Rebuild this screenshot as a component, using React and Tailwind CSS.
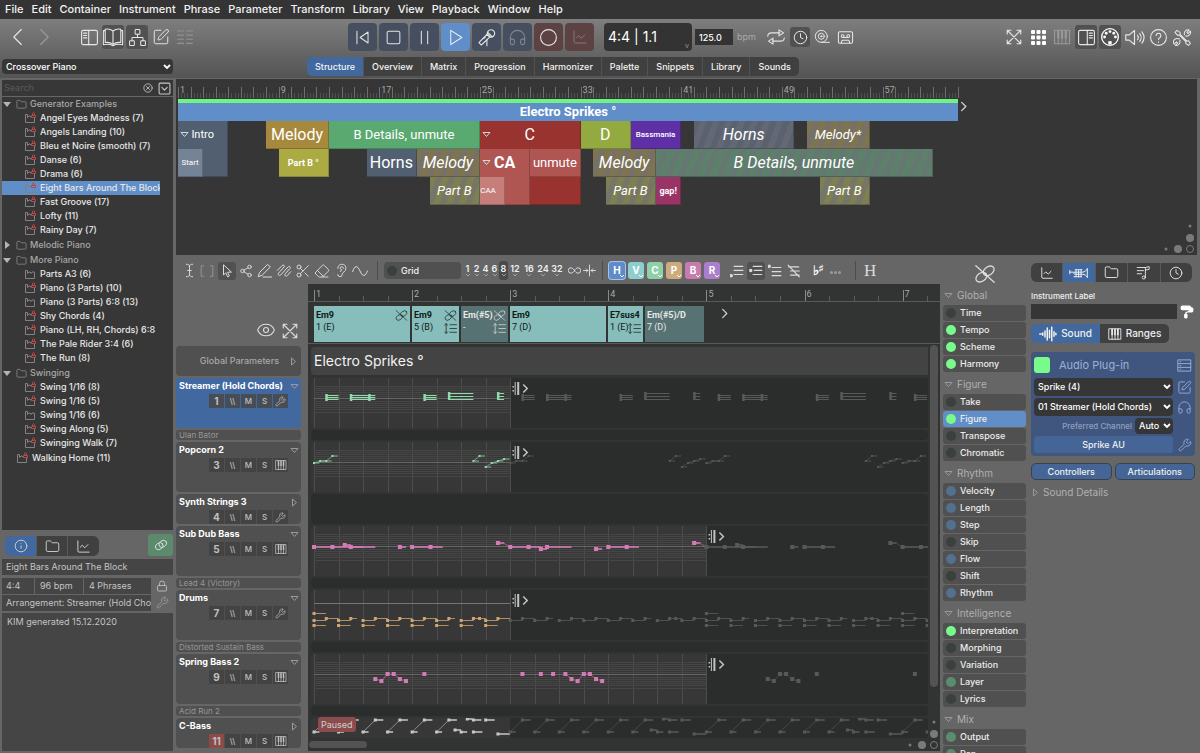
import { useState } from 'react';
import { Network, SquarePen, Folder, ChartLine, Info, Wrench, Lock, Scissors, Eraser, Ear, Eye, Share2, Headphones, Clock, PaintRoller, CassetteTape } from 'lucide-react';

// Horizontal scale of the phrase editor: pixels per sixteenth note
const STEP = 98.1 / 16;

const MENUS = ['File', 'Edit', 'Container', 'Instrument', 'Phrase', 'Parameter', 'Transform', 'Library', 'View', 'Playback', 'Window', 'Help'];

const TABS = ['Structure', 'Overview', 'Matrix', 'Progression', 'Harmonizer', 'Palette', 'Snippets', 'Library', 'Sounds'];

const LIBRARY = [
  {
    name: 'Generator Examples',
    open: true,
    items: [
      ['Angel Eyes Madness (7)', true],
      ['Angels Landing (10)', true],
      ['Bleu et Noire (smooth) (7)', true],
      ['Danse (6)', true],
      ['Drama (6)', true],
      ['Eight Bars Around The Block', true],
      ['Fast Groove (17)', true],
      ['Lofty (11)', true],
      ['Rainy Day (7)', true],
    ],
  },
  { name: 'Melodic Piano', open: false, items: [] },
  {
    name: 'More Piano',
    open: true,
    items: [
      ['Parts A3 (6)', false],
      ['Piano (3 Parts) (10)', true],
      ['Piano (3 Parts) 6:8 (13)', false],
      ['Shy Chords (4)', true],
      ['Piano (LH, RH, Chords) 6:8', true],
      ['The Pale Rider 3:4 (6)', true],
      ['The Run (8)', true],
    ],
  },
  {
    name: 'Swinging',
    open: true,
    items: [
      ['Swing 1/16 (8)', true],
      ['Swing 1/16 (5)', true],
      ['Swing 1/16 (6)', false],
      ['Swing Along (5)', true],
      ['Swinging Walk (7)', true],
    ],
  },
];

const STRIPES = 'bg-[repeating-linear-gradient(110deg,transparent_0_6px,rgba(110,110,120,0.5)_6px_12px)] italic';

// from / to are bar lines counted from zero
const CONTAINERS = [
  { label: 'Intro', from: 0, to: 4, row: 1, rows: 2, look: 'bg-[#515f70] text-[11px]', arrow: true },
  { label: 'Start', from: 0, to: 2, row: 2, look: 'bg-[#758396] text-[8px]' },
  { label: 'Melody', from: 7, to: 12, row: 1, look: 'bg-[#a6893d] text-base' },
  { label: 'Part B °', from: 8, to: 12, row: 2, look: 'bg-[#acab43] text-[9px] font-bold' },
  { label: 'B Details, unmute', from: 12, to: 24, row: 1, look: 'bg-[#5aa970] text-[13px]' },
  { label: 'Horns', from: 15, to: 19, row: 2, look: 'bg-[#515f70] text-base' },
  { label: 'Melody', from: 19, to: 24, row: 2, look: `bg-[#7f7450] text-base ${STRIPES}` },
  { label: 'Part B', from: 20, to: 24, row: 3, look: `bg-[#7f7f54] text-[13px] ${STRIPES}` },
  { label: 'C', from: 24, to: 32, row: 1, rows: 3, look: 'bg-[#99332f] text-base', arrow: true },
  { label: 'CA', from: 24, to: 28, row: 2, rows: 2, look: 'bg-[#af5653] text-base font-bold', arrow: true },
  { label: 'CAA', from: 24, to: 26, row: 3, look: 'bg-[#c67e7b] text-[8px] pr-[8px]' },
  { label: 'unmute', from: 28, to: 32, row: 2, look: 'bg-[#af5653] text-[13px]' },
  { label: 'D', from: 32, to: 36, row: 1, look: 'bg-[#92aa3f] text-base' },
  { label: 'Bassmania', from: 36, to: 40, row: 1, look: 'bg-[#5f2fa6] text-[8px] font-medium' },
  { label: 'Melody', from: 33, to: 38, row: 2, look: `bg-[#7f7450] text-base ${STRIPES}` },
  { label: 'Part B', from: 34, to: 38, row: 3, look: `bg-[#7f7f54] text-[13px] ${STRIPES}` },
  { label: 'gap!', from: 38, to: 40, row: 3, look: 'bg-[#9a3366] text-[9px] font-bold' },
  { label: 'B Details, unmute', from: 38, to: 60, row: 2, look: `bg-[#5c806a] text-base ${STRIPES}` },
  { label: 'Horns', from: 41, to: 49, row: 1, look: `bg-[#5a6270] text-base ${STRIPES}` },
  { label: 'Melody*', from: 50, to: 55, row: 1, look: `bg-[#7f7450] text-[13px] ${STRIPES}` },
  { label: 'Part B', from: 51, to: 55, row: 3, look: `bg-[#7f7f54] text-[13px] ${STRIPES}` },
];

const CHORDS = [
  { name: 'Em9', degree: '1 (E)', width: 'w-[98px]', unlinked: true },
  { name: 'Em9', degree: '5 (B)', width: 'w-[49px]', unlinked: true, voicing: true },
  { name: 'Em(#5)', degree: '-', width: 'w-[49px]', dim: true, unlinked: true, voicing: true },
  { name: 'Em9', degree: '7 (D)', width: 'w-[98px]' },
  { name: 'E7sus4', degree: '1 (E)', width: 'w-[37px]', voicing: true },
  { name: 'Em(#5)/D', degree: '7 (D)', width: 'w-[61px]', dim: true },
];

const TRACKS = [
  { name: 'Streamer (Hold Chords)', no: 1, size: 'tall', tool: 'wrench', selected: true },
  { name: 'Ulan Bator', size: 'thin' },
  { name: 'Popcorn 2', no: 3, size: 'tall', tool: 'keys' },
  { name: 'Synth Strings 3', no: 4, size: 'short', tool: 'wrench' },
  { name: 'Sub Dub Bass', no: 5, size: 'tall', tool: 'keys' },
  { name: 'Lead 4 (Victory)', size: 'thin' },
  { name: 'Drums', no: 7, size: 'tall', tool: 'wrench' },
  { name: 'Distorted Sustain Bass', size: 'thin' },
  { name: 'Spring Bass 2', no: 9, size: 'tall', tool: 'keys' },
  { name: 'Acid Run 2', size: 'thin' },
  { name: 'C-Bass', no: 11, size: 'short', tool: 'keys', alert: true },
];

const PARAMETERS = [
  ['Global', [['Time', 'off'], ['Tempo', 'on'], ['Scheme', 'on'], ['Harmony', 'on']]],
  ['Figure', [['Take', 'off'], ['Figure', 'on', true], ['Transpose', 'off'], ['Chromatic', 'off']]],
  ['Rhythm', [['Velocity', 'blue'], ['Length', 'blue'], ['Step', 'blue'], ['Skip', 'off'], ['Flow', 'blue'], ['Shift', 'off'], ['Rhythm', 'blue']]],
  ['Intelligence', [['Interpretation', 'on'], ['Morphing', 'off'], ['Variation', 'off'], ['Layer', 'dim'], ['Lyrics', 'off']]],
  ['Mix', [['Output', 'dim'], ['Pan', 'dim']]],
];

const LED = {
  on: 'bg-[#79fb8b]',
  off: 'bg-[#3a403e]',
  blue: 'bg-[#54708f]',
  dim: 'bg-[#5c8c70]',
};

/* ---------- icons ---------- */

function Glyph({ size = 16, sw = 1.5, className = '', children }) {
  return (
    <svg width={size} height={size} viewBox="0 0 24 24" fill="none" stroke="currentColor" strokeWidth={sw} strokeLinecap="round" strokeLinejoin="round" className={`shrink-0 ${className}`} aria-hidden="true">
      {children}
    </svg>
  );
}

const KeysIcon = ({ size = 12 }) => (
  <Glyph size={size} sw={1.5}>
    <rect x="2" y="3" width="20" height="18" />
    <path d="M7 14v7M12 14v7M17 14v7" />
    <path d="M7 3v11M12 3v11M17 3v11" strokeWidth="3" strokeLinecap="butt" />
  </Glyph>
);

const ExpandIcon = ({ size = 18 }) => (
  <Glyph size={size} sw={1.5}>
    <path d="M3 8V3h5M16 3h5v5M21 16v5h-5M8 21H3v-5M3 3l18 18M21 3 3 21" />
  </Glyph>
);

const UnlinkIcon = ({ size = 14 }) => (
  <Glyph size={size} sw={1.4}>
    <ellipse cx="8" cy="15.500" rx="6.500" ry="4.500" transform="rotate(-35 8 15.500)" />
    <ellipse cx="16" cy="8.500" rx="6.500" ry="4.500" transform="rotate(-35 16 8.500)" />
    <path d="M2 3l20 18" />
  </Glyph>
);

const VoicingIcon = () => (
  <Glyph size={13} sw={1.6}>
    <path d="M4 3v18M1 6l3-3 3 3M1 18l3 3 3-3M11 5h12M11 12h12M11 19h12" />
  </Glyph>
);

const PanelIcon = ({ flip }) => (
  <Glyph size={19} sw={1.4} className={flip ? '-scale-x-100' : ''}>
    <rect x="2" y="3" width="20" height="18" rx="2" />
    <path d="M11 3v18M4.500 6.500h4M4.500 9.500h4M4.500 12.500h4" />
  </Glyph>
);

const BookIcon = () => (
  <Glyph size={22} sw={1.2}>
    <path d="M12 5.500C9.500 3.500 6 3 3.500 3.500v14.500c3-.5 6 0 8.500 2 2.500-2 5.500-2.500 8.500-2V3.500C18 3 14.500 3.500 12 5.500zM12 5.500V20M3.500 5H1.500v15.500c4-1 7.500-.5 10.500 1 3-1.500 6.500-2 10.500-1V5h-2" />
  </Glyph>
);

const MicIcon = () => (
  <Glyph size={19} sw={1.4}>
    <path d="M13 7.500a4.700 4.700 0 1 1 4 4zM14 6l5 5" />
    <path d="M12.500 8 2.500 18.500l3 3L16 11.500z" />
    <path d="M12.500 15v7.500M8.500 13.500l2-2" />
  </Glyph>
);

const ToolsIcon = () => (
  <Glyph size={19} sw={1.3}>
    <path d="M2.500 5.500 5 3l4 2.500V8l8.500 8.500 2-.5 2.500 3.500-2.500 2.500-3.500-2.500.5-2L8 9H5.500z" />
    <path d="M14.500 8.500a4.800 4.800 0 0 1 6-6L17.500 5.500l1.500 1.500 3-3a4.800 4.800 0 0 1-6 6M9 15.500l-.500 1a4.500 4.500 0 0 1-5.500 5.500l3-3-1.500-1.500-3 3a4.500 4.500 0 0 1 6-6.500l.500-.500" />
  </Glyph>
);

const MidiIcon = () => (
  <Glyph size={20} sw={1.6}>
    <circle cx="12" cy="12" r="10" />
    <g fill="currentColor" stroke="none">
      <circle cx="5.500" cy="12" r="1.700" /><circle cx="18.500" cy="12" r="1.700" /><circle cx="7.500" cy="7.500" r="1.700" />
      <circle cx="16.500" cy="7.500" r="1.700" /><circle cx="12" cy="5.500" r="1.700" /><rect x="10" y="17" width="4" height="4" />
    </g>
  </Glyph>
);

const SpeakerIcon = () => (
  <Glyph size={21} sw={1.3}>
    <path d="M2 9h4l6-5v16l-6-5H2zM15.500 9.500c1 1.500 1 3.500 0 5M18 7.500c2 2.500 2 6.500 0 9M20.500 5.500c3 4 3 9 0 13" />
  </Glyph>
);

const TrumpetIcon = () => (
  <Glyph size={20} sw={1.2}>
    <path d="M1 9v4M1 11h15c3 0 5-2 6-4.500v11c-1-2.500-3-4-6-4H6.500a1.500 1.500 0 0 1 0-2.500M6 16.500h9M8.500 8.500v8M11.500 8.500v8M14.500 8.500v8M7.500 8h2M10.500 8h2M13.500 8h2" />
  </Glyph>
);

const NotesIcon = () => (
  <Glyph size={15} sw={1.4}>
    <path d="M2 4h13M2 9h10M2 14h7M15 20V4l6-1.500v4.500l-6 1" />
    <circle cx="12.500" cy="20" r="2.500" />
  </Glyph>
);

const WaveIcon = () => (
  <Glyph size={18} sw={2}>
    <path d="M1 12h2M5 10.500v3M8 8v8M11 4v16M14 7v10M17 3v18M20 9v6M22.500 11v2" />
  </Glyph>
);

const LinkedIcon = () => (
  <Glyph size={14} sw={1.5}>
    <ellipse cx="9" cy="14" rx="7" ry="5.500" transform="rotate(-35 9 14)" />
    <ellipse cx="15" cy="10" rx="7" ry="5.500" transform="rotate(-35 15 10)" />
  </Glyph>
);

function Triangle({ right, className = 'text-[#9a9a9a]' }) {
  return (
    <svg width="9" height="9" viewBox="0 0 9 9" fill="none" stroke="currentColor" className={`shrink-0 ${className}`} aria-hidden="true">
      <path d={right ? 'M2.500 1v7l4-3.500z' : 'M1 2.500h7l-3.500 4z'} />
    </svg>
  );
}

// Zoom handles in the corner of a scrolling view
function ZoomDots({ className }) {
  return (
    <svg width="32" height="32" className={`absolute ${className}`} fill="#7a7a7a" aria-hidden="true">
      <circle cx="26" cy="3" r="1.500" /><circle cx="26" cy="15" r="4" />
      <circle cx="2" cy="26" r="1.500" /><circle cx="14" cy="26" r="4" />
      <circle cx="26" cy="26" r="3.500" fill="none" stroke="#7a7a7a" />
    </svg>
  );
}

/* ---------- small controls ---------- */

function Picker({ label, options, className }) {
  return (
    <div className={`relative ${className}`}>
      <select aria-label={label} className="block h-full w-full appearance-none overflow-hidden rounded-[4px] bg-[#363636] pl-[4px] pr-[11px] text-[9px] font-medium text-white outline-none">
        {options.map((option) => <option key={option}>{option}</option>)}
      </select>
      <svg width="8" height="6" viewBox="0 0 8 6" className="pointer-events-none absolute right-[2px] top-1/2 -translate-y-1/2" fill="none" stroke="#fff" strokeWidth="1.800" aria-hidden="true">
        <path d="M1 1l3 3 3-3" />
      </svg>
    </div>
  );
}

function IconButton({ label, active, className = '', children }) {
  return (
    <button aria-label={label} className={`flex shrink-0 items-center justify-center rounded-[3px] ${active ? 'bg-[#515151]' : ''} ${className}`}>
      {children}
    </button>
  );
}

/* ---------- header ---------- */

function MenuBar() {
  return (
    <nav className="flex h-[19px] shrink-0 items-center gap-2 bg-[#343434] pl-[5px] text-[11px] font-medium text-[#f2f2f2]">
      {MENUS.map((menu) => <button key={menu}>{menu}</button>)}
    </nav>
  );
}

function Transport() {
  const idle = 'bg-[#454f5f] text-[#e4e4e4]';
  const armed = 'bg-[#5c4242] text-[#e4e4e4]';
  const buttons = [
    ['Rewind', idle, <Glyph size={19} sw={1.3} key="i"><path d="M5 4v16M19 5v14L9 12z" /></Glyph>],
    ['Stop', idle, <Glyph size={19} sw={1.3} key="i"><rect x="4" y="4" width="16" height="16" rx="2" /></Glyph>],
    ['Pause', idle, <Glyph size={19} sw={1.3} key="i"><path d="M8 4v16M16 4v16" /></Glyph>],
    ['Play', 'bg-[#608ec8] text-[#f0f0f0]', <Glyph size={19} sw={1.3} key="i"><path d="M6 3v18l14-9z" /></Glyph>],
    ['Sing', idle, <MicIcon key="i" />],
    ['Listen', 'bg-[#454f5f] text-[#7f8791]', <Headphones size={19} strokeWidth={1.4} key="i" />],
    ['Record', armed, <Glyph size={19} sw={1.4} key="i"><circle cx="12" cy="12" r="10" /></Glyph>],
    ['Record curve', 'bg-[#5c4242] text-[#8b7777]', <ChartLine size={16} strokeWidth={1.5} key="i" />],
  ];
  return (
    <div className="flex gap-[2px]">
      {buttons.map(([label, look, icon]) => (
        <button key={label} aria-label={label} className={`flex h-7 w-[29px] items-center justify-center rounded-[4px] ${look}`}>{icon}</button>
      ))}
    </div>
  );
}

function Header() {
  const [tab, setTab] = useState('Structure');
  return (
    <header className="flex h-[59px] shrink-0 flex-col bg-linear-to-b from-[#7e7e7e] to-[#545454] text-[#e6e6e6]">
      <div className="flex h-[36px] items-center">
        <div className="flex w-[348px] shrink-0 items-center pl-[8px]">
          <IconButton label="Back" className="w-5"><Glyph size={20} sw={1.4}><path d="m16 3-9 9 9 9" /></Glyph></IconButton>
          <IconButton label="Forward" className="ml-[6px] w-5 text-[#999]"><Glyph size={20} sw={1.4}><path d="m8 3 9 9-9 9" /></Glyph></IconButton>
          <div className="ml-[24px] flex items-center gap-[2px]">
            <IconButton label="Library panel" className="h-6 w-[22px]"><PanelIcon /></IconButton>
            <IconButton label="Book view" active className="h-6 w-[22px]"><BookIcon /></IconButton>
            <IconButton label="Tree view" active className="h-6 w-[22px]"><Network size={19} strokeWidth={1.3} /></IconButton>
            <IconButton label="Edit" className="h-6 w-[22px]"><SquarePen size={18} strokeWidth={1.3} /></IconButton>
            <IconButton label="Rows" className="h-6 w-[22px] text-[#929292]">
              <Glyph size={18} sw={1.4}><path d="M2 4h8M2 9.500h8M2 15h8M2 20.500h8M14 4h8M14 9.500h8M14 15h8M14 20.500h8" /></Glyph>
            </IconButton>
          </div>
        </div>
        <Transport />
        <div className="relative ml-[10px] h-7 w-[88px] rounded-[4px] bg-[#333] pl-[4px] text-[14px] leading-7 text-white">
          4:4 | 1.1
          <span className="absolute bottom-[2px] right-[3px] text-[7px] leading-none text-[#999]">v</span>
        </div>
        <input aria-label="Tempo" defaultValue="125.0" className="ml-[3px] h-4 w-[38px] bg-[#333] px-[4px] text-[9px] font-medium text-white" />
        <span className="ml-[4px] w-[20px] text-[9px] text-[#aaa]">bpm</span>
        <div className="ml-[9px] flex items-center gap-[2px]">
          <IconButton label="Loop" className="h-5 w-5">
            <Glyph size={18} sw={1.4}><path d="M1 11c0-3 2-4.500 5-4.500h11M16 2.500l6 4-6 4zM23 13c0 3-2 4.500-5 4.500H7M8 13.500l-6 4 6 4z" /></Glyph>
          </IconButton>
          <IconButton label="Clock" active className="ml-[2px] h-5 w-5"><Clock size={15} strokeWidth={1.6} /></IconButton>
          <IconButton label="Tape" className="h-5 w-5">
            <Glyph size={16}><circle cx="11" cy="11" r="9" /><circle cx="11" cy="11" r="4.500" /><circle cx="11" cy="11" r="1" /><path d="M11 20h12" /></Glyph>
          </IconButton>
          <IconButton label="Cassette" className="ml-px h-5 w-5"><CassetteTape size={17} strokeWidth={1.5} /></IconButton>
        </div>
        <div className="ml-auto flex items-center gap-[2px] pr-[7px]">
          <IconButton label="Full screen" className="h-6 w-[22px]"><ExpandIcon /></IconButton>
          <IconButton label="Grid" className="h-6 w-[22px] text-white">
            <svg width="15" height="15" viewBox="0 0 15 15" fill="currentColor" aria-hidden="true">
              {[0, 5.5, 11].map((y) => [0, 5.5, 11].map((x) => <rect key={`${x}-${y}`} x={x} y={y} width="4" height="4" rx="1" />))}
            </svg>
          </IconButton>
          <IconButton label="Keyboard" className="h-6 w-[22px] text-[#999]"><KeysIcon size={18} /></IconButton>
          <IconButton label="Inspector panel" active className="h-6 w-[22px]"><PanelIcon flip /></IconButton>
          <IconButton label="MIDI" active className="h-6 w-[22px] text-white"><MidiIcon /></IconButton>
          <IconButton label="Volume" className="h-6 w-[22px]"><SpeakerIcon /></IconButton>
          <IconButton label="Help" className="h-6 w-[22px]">
            <Glyph size={19} sw={1.4}><circle cx="12" cy="12" r="10" /><path d="M9 9.500a3 3 0 1 1 4.500 2.700c-1 .6-1.500 1.200-1.500 2.300M12 17.500v.5" /></Glyph>
          </IconButton>
          <IconButton label="Settings" className="h-6 w-[22px]"><ToolsIcon /></IconButton>
        </div>
      </div>
      <div className="flex items-center pt-[2px]">
        <div className="w-[307px] shrink-0 pl-[2px]">
          <Picker label="Library" options={['Crossover Piano']} className="h-[15px] w-[171px]" />
        </div>
        <div role="tablist" className="flex h-[19px] gap-px overflow-hidden rounded-[5px] bg-[#525252]">
          {TABS.map((name) => (
            <button key={name} role="tab" aria-selected={tab === name} onClick={() => setTab(name)} className={`px-2 text-[9px] font-medium text-[#f2f2f2] ${tab === name ? 'bg-[#41689f]' : 'bg-[#404040]'}`}>
              {name}
            </button>
          ))}
        </div>
      </div>
    </header>
  );
}

/* ---------- left sidebar ---------- */

function PhraseIcon({ locked }) {
  return (
    <svg width="13" height="12" viewBox="0 0 13 12" fill="none" className="shrink-0" aria-hidden="true">
      <path d="M1.500 2.500v8h9v-4.500M1.500 2.500h2v3l1.500-1.500h1l1 1.500" stroke="#828282" />
      {!locked && <path d="M7 5.500l1-1.500h2.500v3" stroke="#828282" />}
      {locked && <path d="M7.500 3.500h4v2h-4zM8.500 3.500V1.500c0-1 2-1 2 0v2" stroke="#b94a48" />}
    </svg>
  );
}

function LibraryTree() {
  return (
    <div className="min-h-0 flex-1 overflow-hidden bg-[#373737] pr-[13px] text-[9px] font-medium text-[#e8e8e8]">
      <ul>
        {LIBRARY.map((group) => (
          <li key={group.name} className="mb-px">
            <button className="flex h-[14px] w-full items-center text-[#a8a8a8]">
              <svg width="10" height="8" viewBox="0 0 10 8" fill="#b4b4b4" aria-hidden="true">
                <path d={group.open ? 'M1 2h8L5 7z' : 'M3 0v8l5-4z'} />
              </svg>
              <Folder size={11} strokeWidth={1.7} className="ml-[4px] mr-[3px] text-[#8c8c8c]" />
              {group.name}
            </button>
            <ul>
              {group.items.map(([name, locked]) => (
                <li key={name}>
                  <button className={`flex h-[14px] w-full items-center gap-[3px] overflow-hidden whitespace-nowrap pl-[22px] ${name.startsWith('Eight') ? 'bg-[#608ec8]' : ''}`}>
                    <PhraseIcon locked={locked} />
                    {name}
                  </button>
                </li>
              ))}
            </ul>
          </li>
        ))}
        <li>
          <button className="flex h-[14px] items-center gap-[3px] pl-[14px]"><PhraseIcon locked />Walking Home (11)</button>
        </li>
      </ul>
    </div>
  );
}

function Sidebar() {
  return (
    <aside className="flex w-[174px] shrink-0 flex-col pl-[2px] pr-px">
      <div className="mb-px mt-[2px] flex h-[16px] items-center bg-[#373737] pl-[2px] pr-[2px] text-[#c8c8c8]">
        <input aria-label="Search" placeholder="Search" className="min-w-0 flex-1 bg-transparent text-[9px] outline-none placeholder:text-[#5a5a5a]" />
        <button aria-label="Clear search" className="mr-[5px]"><Glyph size={10} sw={2}><circle cx="12" cy="12" r="10" /><path d="m8 8 8 8M16 8l-8 8" /></Glyph></button>
        <button aria-label="Search options"><Glyph size={13} sw={2}><rect x="2" y="2" width="20" height="20" rx="2" /><path d="m7 10 5 5 5-5" /></Glyph></button>
      </div>
      <LibraryTree />
      <div className="flex h-[29px] shrink-0 items-center justify-between pl-[3px]">
        <div className="mt-[3px] flex h-[20px] gap-px overflow-hidden rounded-[6px] bg-[#5a5a5a] text-[#d8d8d8]">
          <button aria-label="Info" className="flex w-[31px] items-center justify-center bg-[#41689f]"><Info size={14} strokeWidth={1.5} /></button>
          <button aria-label="Files" className="flex w-[30px] items-center justify-center bg-[#404040]"><Folder size={15} strokeWidth={1.4} /></button>
          <button aria-label="Chart" className="flex w-[31px] items-center justify-center bg-[#404040]"><ChartLine size={15} strokeWidth={1.5} /></button>
        </div>
        <button aria-label="Linked" className="flex h-[22px] w-[25px] items-center justify-center rounded-[3px] bg-[#5b8b6c] text-[#e0e0e0]"><LinkedIcon /></button>
      </div>
      <div className="flex h-[194px] shrink-0 flex-col gap-[2px] text-[9px] text-[#c4c4c4]">
        <div className="h-[16px] bg-[#454545] pl-[4px] leading-4">Eight Bars Around The Block</div>
        <div className="mt-px flex items-center">
          <div className="flex w-[149px] flex-col gap-px">
            <div className="flex gap-px leading-4">
              <span className="w-[32px] bg-[#454545] pl-[4px]">4:4</span>
              <span className="w-[48px] bg-[#454545] pl-[5px]">96 bpm</span>
              <span className="flex-1 bg-[#454545] pl-[5px]">4 Phrases</span>
            </div>
            <span className="overflow-hidden whitespace-nowrap bg-[#454545] pl-[4px] leading-4">Arrangement: Streamer (Hold Chords)</span>
          </div>
          <div className="flex flex-1 flex-col items-center gap-[4px]">
            <Lock size={12} strokeWidth={1.7} />
            <Wrench size={13} strokeWidth={1.5} className="text-[#a0a0a0]" />
          </div>
        </div>
        <textarea aria-label="Comment" defaultValue="KIM generated 15.12.2020" className="mb-[2px] min-h-0 flex-1 resize-none bg-[#454545] px-[5px] py-[2px] leading-[14px] outline-none" />
      </div>
    </aside>
  );
}

/* ---------- arrangement ---------- */

function Arrangement() {
  const bar = 780 / 62;
  return (
    <section className="relative ml-[2px] mr-[3px] mt-px h-44 shrink-0 overflow-hidden bg-[#363636] pl-[2px] font-[Roboto]">
      <svg width="784" height="20" className="block" aria-hidden="true">
        {Array.from({ length: 249 }, (_, i) => (
          <path key={i} d={`M${Math.round(i * bar / 4) + 0.5} ${i % 4 ? 14 : 8}V19`} stroke={i % 4 ? '#505050' : '#6e6e6e'} />
        ))}
        {[1, 9, 17, 25, 33, 41, 49, 57].map((n) => (
          <g key={n}>
            <rect x={(n - 1) * bar + 2} y="6" width={n > 9 ? 10 : 5} height="8" fill="#363636" />
            <text x={(n - 1) * bar + 2} y="14" fontSize="9" fill="#a8a8a8">{n}</text>
          </g>
        ))}
      </svg>
      <div className="flex items-center">
        <div className="flex h-[22px] w-[780px] shrink-0 items-center justify-center border-t-4 border-[#6ff383] bg-[#608ec8] text-[13px] font-bold text-white">Electro Sprikes °</div>
        <button aria-label="Continue" className="pb-[8px] text-[#d0d0d0]"><Glyph size={11} sw={3}><path d="m8 3 9 9-9 9" /></Glyph></button>
      </div>
      <div className="grid w-[780px] grid-cols-[repeat(62,minmax(0,1fr))] grid-rows-[28px_28px_28px] text-white">
        {CONTAINERS.map((c) => (
          <div
            key={`${c.from}-${c.row}`}
            className={`relative flex justify-center overflow-hidden whitespace-nowrap border-b border-r border-black/20 leading-7 ${c.look}`}
            style={{ gridColumn: `${c.from + 1} / ${c.to + 1}`, gridRow: `${c.row} / span ${c.rows || 1}` }}
          >
            {c.arrow && <Triangle className="absolute left-[2px] top-[9px] text-[#d8d8d8]" />}
            {c.label}
          </div>
        ))}
      </div>
      <ZoomDots className="bottom-0 right-px" />
    </section>
  );
}

/* ---------- phrase editor ---------- */

function EditorToolbar() {
  const [grid, setGrid] = useState('8');
  const tints = [
    ['H', 'bg-[#5f8cc9] ring-1 ring-[#a3c2ee]'], ['V', 'bg-[#8dcfce]'], ['C', 'bg-[#8ed0a7]'],
    ['P', 'bg-[#cdab7c]'], ['B', 'bg-[#c87cae]'], ['R', 'bg-[#aa7ecb]'],
  ];
  return (
    <div className="flex h-[27px] shrink-0 items-center pl-[8px] text-[#dcdcdc]">
      <div className="flex items-center gap-[1px]">
        <IconButton label="Text" className="h-[18px] w-[14px]"><Glyph size={15}><path d="M7 2c3 0 5 1 5 3 0-2 2-3 5-3M7 22c3 0 5-1 5-3 0 2 2 3 5 3M12 5v14M9 12h6" /></Glyph></IconButton>
        <IconButton label="Range" className="mx-[3px] h-[18px] w-[14px] text-[#999]"><Glyph size={14}><path d="M6 3H2v18h4M18 3h4v18h-4" /></Glyph></IconButton>
        <IconButton label="Select" active className="h-[18px] w-[18px]"><Glyph size={14} sw={1.700}><path d="M6 2v17l4-4 3 7 3-1.500-3-6.500h6z" /></Glyph></IconButton>
        <IconButton label="Connect" className="h-[18px] w-[18px]"><Share2 size={14} strokeWidth={1.6} /></IconButton>
        <IconButton label="Draw" className="h-[18px] w-[18px]"><Glyph size={16}><path d="M2 20 4 14 16 2l4 4L8 18zM9 21h13" /></Glyph></IconButton>
        <IconButton label="Scribble" className="h-[18px] w-[18px]"><Glyph size={16}><path d="M2 11 9 4c2-2 5 0 3 2l-8 9c-2 3 1 5 3 3L18 6c2-2 5 0 3 2l-7 8c-2 3 1 5 3 3l5-6" /></Glyph></IconButton>
        <IconButton label="Cut" className="h-[18px] w-[18px]"><Scissors size={16} strokeWidth={1.4} /></IconButton>
        <IconButton label="Erase" className="h-[18px] w-[18px]"><Eraser size={16} strokeWidth={1.4} /></IconButton>
        <IconButton label="Audition" className="h-[18px] w-[18px]"><Ear size={15} strokeWidth={1.5} /></IconButton>
        <IconButton label="Curve" className="h-[18px] w-[18px]"><Glyph size={16}><path d="M1 13C4 3 8 3 12 12s8 9 11 0" /></Glyph></IconButton>
      </div>
      <span className="ml-[8px] h-[19px] w-px bg-[#4c4c4c]" />
      <button className="ml-[6px] flex h-[17px] w-[77px] items-center gap-[4px] rounded-[4px] bg-[#505050] pl-[3px] text-[9px] font-medium text-[#f0f0f0]">
        <span className="h-[10px] w-[10px] rounded-full bg-[#3a403e]" />Grid
      </button>
      <div className="ml-[2px] flex items-center text-[9px] font-semibold text-[#f0f0f0]">
        {['1', '2', '4', '6', '8', '12', '16', '24', '32'].map((n) => (
          <button key={n} onClick={() => setGrid(n)} className={`flex h-[19px] flex-col items-center rounded-[3px] pt-[3px] leading-[10px] ${n.length > 1 ? 'w-[14px]' : 'w-[9px]'} ${grid === n ? 'bg-[#4a4a4a]' : ''}`}>
            {n}
            <svg width="4" height="3" viewBox="0 0 4 3" fill="none" stroke="#a0a0a0" aria-hidden="true"><path d="M0 0l2 2 2-2" /></svg>
          </button>
        ))}
        <IconButton label="Infinite grid" className="ml-[3px] h-[18px] w-[15px]"><Glyph size={13}><path d="M12 12c-2-3-4-5-6.500-5a5 5 0 0 0 0 10c2.500 0 4.500-2 6.500-5s4-5 6.500-5a5 5 0 0 1 0 10c-2.500 0-4.500-2-6.500-5z" /></Glyph></IconButton>
        <IconButton label="Snap" className="h-[18px] w-[15px]"><Glyph size={13}><path d="M12 2v20M1 12h8M6 9l3 3-3 3M23 12h-8M18 9l-3 3 3 3" /></Glyph></IconButton>
      </div>
      <span className="ml-[5px] h-[19px] w-px bg-[#4c4c4c]" />
      <div className="ml-[6px] flex gap-[3px]">
        {tints.map(([key, tint]) => (
          <button key={key} className={`relative h-[17px] w-[16px] rounded-[3px] text-[10px] font-bold leading-[17px] text-white ${tint}`}>
            {key}
            <svg width="4" height="3" viewBox="0 0 4 3" className="absolute bottom-[1px] right-[1px]" fill="none" stroke="#fff" aria-hidden="true"><path d="M0 0l2 2 2-2" /></svg>
          </button>
        ))}
      </div>
      <div className="ml-[8px] flex items-center gap-[1px]">
        <IconButton label="Align low" className="h-[18px] w-[18px]"><Glyph size={14} sw={2}><path d="M7 4h15M7 11h15M7 18h15" /><circle cx="2" cy="20" r="2" fill="currentColor" /></Glyph></IconButton>
        <IconButton label="Align middle" active className="h-[18px] w-[18px]"><Glyph size={14} sw={2}><path d="M7 4h15M9 11h13M7 18h15" /><circle cx="3" cy="11" r="2" fill="currentColor" /></Glyph></IconButton>
        <IconButton label="Align high" className="h-[18px] w-[18px]"><Glyph size={14} sw={2}><path d="M7 6h15M7 13h15M7 20h15" /><circle cx="2" cy="4" r="2" fill="currentColor" /></Glyph></IconButton>
        <IconButton label="No align" className="h-[18px] w-[18px]"><Glyph size={14} sw={2}><path d="M3 5h17M6 12h15M6 19h15M2 2l19 20" /></Glyph></IconButton>
      </div>
      <button aria-label="Accidentals" className="ml-[6px] w-[18px] text-[13px] font-bold leading-none text-white">♭<sup className="text-[9px]">♯</sup></button>
      <span className="ml-[3px] flex gap-px pt-[3px]">
        {[0, 1, 2].map((i) => <span key={i} className="h-[3px] w-[3px] rounded-sm bg-[#999]" />)}
      </span>
      <span className="ml-[14px] h-[19px] w-px bg-[#4c4c4c]" />
      <button aria-label="Harmony" className="ml-[8px] font-['Liberation_Serif'] text-[17px] leading-none">H</button>
    </div>
  );
}

const HEIGHTS = { tall: 'h-[50px]', short: 'h-[30px]', thin: 'h-[10px]' };

function TrackHeader({ track }) {
  if (track.size === 'thin') {
    return <div className="h-[10px] shrink-0 rounded-[3px] bg-[#505050] pl-[3px] text-[8px] leading-[10px] text-[#979797]">{track.name}</div>;
  }
  const cell = `flex h-[14px] w-[15px] items-center justify-center text-[8px] font-medium ${track.selected ? 'bg-[#464d55]' : 'bg-[#434343]'}`;
  return (
    <div className={`shrink-0 rounded-[4px] ${HEIGHTS[track.size]} ${track.selected ? 'bg-[#41689f]' : 'bg-[#505050]'}`}>
      <div className="flex h-[16px] items-center justify-between whitespace-nowrap pl-[3px] pr-[2px] text-[9px] font-bold text-white">
        {track.name}
        <Triangle right={track.size === 'short'} />
      </div>
      <div className="flex justify-end gap-px pr-[13px] text-[#c0c0c0]">
        <span className={`${cell} ${track.alert ? 'bg-[#8c4a49]!' : ''}`}><b className="text-[10px]">{track.no}</b></span>
        <button className={cell}>\\</button>
        <button className={cell}>M</button>
        <button className={cell}>S</button>
        <button aria-label="Instrument" className={cell}>{track.tool === 'keys' ? <KeysIcon size={12} /> : <Wrench size={11} strokeWidth={1.6} />}</button>
      </div>
    </div>
  );
}

// Each builder draws one pass of the phrase; x() turns a sixteenth into pixels
const PHRASES = {
  1: {
    length: 32,
    color: '#8fdcab',
    draw: (x, color) => [[2, 4, 0], [6, 9, 0], [9, 10, 0], [18, 20, 0], [22, 26, 1], [30, 31, 1]].map(([a, b, high]) => {
      const y = high ? 15 : 17;
      const gap = high ? 3 : 2;
      return (
        <g key={a} fill={color}>
          <rect x={x(a) - 1} y={y - 1} width="2.500" height={high ? 8 : 7} />
          {[0, 1, 2].map((i) => <rect key={i} x={x(a)} y={y + i * gap} width={x(b) - x(a)} height="1" />)}
        </g>
      );
    }),
  },
  3: {
    length: 32,
    color: '#8fdcab',
    draw: (x, color) => {
      const notes = [[0, 21], [1, 19], [2, 19], [3, 14], [26, 19], [27, 14], [28, 25], [29, 21], [30, 19], [31, 17]];
      return notes.map(([a, y], i) => {
        const next = notes[i + 1];
        return (
          <g key={a} fill={color} stroke={color}>
            <rect x={x(a) - 1} y={y - 1} width="2" height="2" stroke="none" />
            <path d={`M${x(a)} ${y}h5.500`} strokeWidth="0.800" />
            {next && next[0] === a + 1 && a !== 27 && <path d={`M${x(a)} ${y}L${x(next[0])} ${next[1]}`} strokeWidth="0.600" />}
          </g>
        );
      });
    },
  },
  5: {
    length: 64,
    color: '#d67bb8',
    draw: (x, color) => [
      [0, 3, 21], [3, 5, 21], [5, 1, 19], [6, 4, 21], [14, 1, 21], [16, 3, 21], [19, 2, 21], [30, 1, 17],
      [32, 3, 21], [35, 2, 21], [37, 1, 23], [38, 4, 21], [46, 1, 23], [48, 3, 21], [51, 2, 21], [62, 1, 17],
    ].map(([a, len, y]) => (
      <g key={a} fill={color}>
        <rect x={x(a) - 2} y={y - 2} width="4" height="4" />
        <rect x={x(a)} y={y - 1} width={len * STEP} height="2" opacity="0.8" />
        {(a === 30 || a === 62) && <path d={`M${x(a) + 6} ${y}l5 4`} stroke={color} strokeWidth="0.600" />}
      </g>
    )),
  },
  7: {
    length: 32,
    color: '#d1a56f',
    draw: (x, color, pass) => {
      const line = [0, 2, 4, 6, 8, 10, 12, 14, 16, 18, 20, 22, 24, 26, 27, 28, 30];
      const y = (a) => (a % 4 ? 28.5 : 30.5);
      return (
        <g fill={color} stroke={color}>
          {line.map((a, i) => (
            <g key={a}>
              <rect x={x(a) - 1.5} y={y(a) - 1.5} width="3" height="3" stroke="none" />
              <path d={`M${x(a)} ${y(a)}H${a === 6 || a === 22 ? x(a + 1) : x(line[i + 1] || 32)}`} strokeWidth="0.800" />
              {a !== 6 && a !== 22 && line[i + 1] && <path d={`M${x(line[i + 1])} ${y(a)}V${y(line[i + 1])}`} strokeWidth="0.600" />}
            </g>
          ))}
          {pass !== 1 && [0, 4, 8, 12, 16, 20, 24, 28].map((a) => (
            <g key={a}><rect x={x(a) - 1.5} y="34" width="3" height="3" stroke="none" /><path d={`M${x(a)} 35.500h12`} strokeWidth="0.800" /></g>
          ))}
          {pass !== 1 && <><rect x={x(0) - 1.5} y="22" width="3" height="3" stroke="none" /><path d={`M${x(0)} 23.500h12`} strokeWidth="0.800" /></>}
        </g>
      );
    },
  },
  9: {
    length: 64,
    color: '#d67bb8',
    draw: (x, color) => {
      const notes = [[10, 25], [11, 27], [12, 20], [13, 20], [14, 25], [15, 27], [18, 20], [34, 20], [37, 20], [39, 20], [41, 20], [42, 25], [43, 27], [44, 20], [45, 20], [46, 25], [47, 27]];
      return notes.map(([a, y], i) => {
        const next = notes[i + 1];
        return (
          <g key={a}>
            <rect x={x(a) - 2} y={y - 2} width="4" height="4" fill={color} />
            {next && next[0] === a + 1 && <path d={`M${x(a)} ${y}L${x(next[0])} ${next[1]}`} stroke={color} strokeWidth="0.600" />}
          </g>
        );
      });
    },
  },
  11: {
    length: 32,
    color: '#c9c9c9',
    draw: (x, color) => (
      <g fill={color} stroke={color}>
        {[0, 4, 8, 12, 16, 20].map((a) => (
          <g key={a}>
            <rect x={x(a) - 1.5} y="12.500" width="3" height="3" stroke="none" /><path d={`M${x(a)} 14h5.500`} strokeWidth="1.500" />
            <path d={`M${x(a)} 14L${x(a + 2)} 2`} strokeWidth="0.600" />
            <rect x={x(a + 2) - 1.5} y="0.500" width="3" height="3" stroke="none" /><path d={`M${x(a + 2)} 2h8`} strokeWidth="1.500" />
          </g>
        ))}
        {[[23, 12, 6], [24, 14, 6], [26, 14, 9], [25, 1, 5], [26, 2, 8], [28, 2, 9], [30, 16, 12]].map(([a, y, w]) => (
          <g key={`${a}-${y}`}><rect x={x(a) - 1.5} y={y - 1.5} width="3" height="3" stroke="none" /><path d={`M${x(a)} ${y}h${w}`} strokeWidth="1.500" /></g>
        ))}
      </g>
    ),
  },
};

function Lane({ track }) {
  const phrase = PHRASES[track.no];
  if (!phrase) {
    return <div className={`shrink-0 rounded-[4px] bg-[#2b2d2c] ${HEIGHTS[track.size]}`} />;
  }
  const end = 3 + phrase.length * STEP;
  const passes = Math.ceil(100 / phrase.length) + 1;
  const bassRow = track.no === 11;
  const marked = !bassRow;
  return (
    <div className={`shrink-0 overflow-hidden rounded-l-[4px] bg-[#2b2d2c] ${bassRow ? 'h-[20px]' : HEIGHTS[track.size]}`}>
      <svg width="100%" height="50" className="block" aria-hidden="true">
        <rect width={end} height="50" fill="#373737" />
        {!bassRow && Array.from({ length: phrase.length / 4 + 1 }, (_, i) => (
          <path key={i} d={`M${Math.round(3 + i * 4 * STEP) + 0.5} 0V50`} stroke="#4c4c4c" />
        ))}
        {!bassRow && track.no !== 7 && [8, 10, 12, 14, 16, 18, 23, 25, 27, 29, 31, 34].map((y) => (
          <path key={y} d={`M3 ${y + 0.5}H${end}`} stroke="#464646" />
        ))}
        {!bassRow && <path d={track.no === 7 ? `M3 13.500H${end}` : `M3 20.500H${end}`} stroke={track.no === 7 ? '#777' : '#666'} />}
        {Array.from({ length: passes }, (_, pass) => (
          <g key={pass}>{phrase.draw((a) => 3 + (a + pass * phrase.length) * STEP, pass ? '#585959' : phrase.color, pass)}</g>
        ))}
        {marked && (
          <g fill="none" stroke="#c4c4c4">
            <path d={`M${end + 5} 4V17`} />
            <path d={`M${end + 8} 4V17`} strokeWidth="2" />
            <path d={`M${end + 3} 8v1.500M${end + 3} 12v1.500`} strokeWidth="1.500" />
            <path d={`M${end + 13} 6.500l4 4-4 4`} strokeWidth="1.500" />
          </g>
        )}
      </svg>
    </div>
  );
}

function ChordTrack() {
  return (
    <div className="flex h-[42px] items-start border-b border-[#585a59] pl-[6px] pt-[4px] font-[Roboto] text-[9px]">
      {CHORDS.map((chord, i) => (
        <div key={i} className={`h-[36px] shrink-0 pr-[2px] ${chord.width}`}>
          <div className={`flex h-full justify-between overflow-hidden whitespace-nowrap pl-[2px] pt-[3px] ${chord.dim ? 'bg-[#567273] text-[#e8e8e8]' : 'bg-[#87bdba] text-[#101818]'}`}>
            <div className="w-0 leading-[12px]">
              <b className="block font-bold">{chord.name}</b>
              <span className="block">{chord.degree}</span>
            </div>
            <div className="flex flex-col items-end pr-[2px] opacity-80">
              {chord.unlinked ? <UnlinkIcon size={13} /> : <span className="h-[13px]" />}
              {chord.voicing && <VoicingIcon />}
            </div>
          </div>
        </div>
      ))}
      <button aria-label="Next" className="ml-[13px] mt-[2px] text-[#c8c8c8]"><Glyph size={11} sw={3}><path d="m8 3 9 9-9 9" /></Glyph></button>
    </div>
  );
}

function Editor() {
  return (
    <div className="relative mb-[2px] flex min-w-0 flex-1 flex-col overflow-hidden bg-[#313433]">
      <svg width="100%" height="18" className="block shrink-0 border-b border-[#585a59] font-[Roboto]" aria-hidden="true">
        {Array.from({ length: 26 }, (_, i) => (
          <path key={i} d={`M${Math.round(6 + i * 24.525) + 0.5} ${i % 4 ? 12 : 6}V18`} stroke={i % 4 ? '#5c5c5c' : '#8a8a8a'} />
        ))}
        {[1, 2, 3, 4, 5, 6, 7].map((n) => <text key={n} x={8 + (n - 1) * 98.1} y="13" fontSize="9" fill="#a8a8a8">{n}</text>)}
      </svg>
      <ChordTrack />
      <div className="flex min-h-0 flex-1">
        <div className="flex min-w-0 flex-1 flex-col overflow-hidden pl-[3px] pt-[3px]">
          <h2 className="mb-[3px] h-[28px] shrink-0 rounded-l-[4px] bg-[#434343] pl-[3px] text-[14px] leading-7 text-[#f2f2f2]">Electro Sprikes °</h2>
          <div className="flex min-h-0 flex-1 flex-col gap-[2px] overflow-hidden">
            {TRACKS.map((track) => <Lane key={track.name} track={track} />)}
          </div>
        </div>
        <div className="w-[12px] shrink-0 pl-[2px] pt-px">
          <div className="h-[342px] w-[8px] rounded-full bg-[#535353]" />
        </div>
      </div>
      <div className="h-[13px] shrink-0 pl-px pt-[3px]"><div className="h-[7px] w-[58px] rounded-full bg-[#535353]" /></div>
      <span className="absolute bottom-[19px] left-[10px] rounded-[3px] bg-[#8c4c4b] px-[3px] text-[9px] leading-[15px] text-[#cfcfcf]">Paused</span>
      <ZoomDots className="bottom-0 right-0" />
    </div>
  );
}

function Workspace() {
  return (
    <section className="flex min-w-0 flex-1 flex-col">
      <EditorToolbar />
      <div className="flex min-h-0 flex-1">
        <div className="flex w-[134px] shrink-0 flex-col gap-[2px] overflow-hidden pl-[2px] pr-[7px]">
          <div className="flex h-[60px] shrink-0 items-end justify-end gap-[5px] pb-[4px] pr-[2px] text-[#dcdcdc]">
            <button aria-label="Visibility"><Eye size={20} strokeWidth={1.3} /></button>
            <button aria-label="Zoom all"><ExpandIcon /></button>
          </div>
          <button className="flex h-[30px] shrink-0 items-center justify-end gap-[10px] rounded-[4px] bg-[#505050] pr-[3px] text-[9px] font-medium text-[#a8a8a8]">
            Global Parameters<Triangle right />
          </button>
          {TRACKS.map((track) => <TrackHeader key={track.name} track={track} />)}
        </div>
        <Editor />
      </div>
    </section>
  );
}

/* ---------- right side ---------- */

function ParameterList() {
  return (
    <section className="flex w-[91px] shrink-0 flex-col overflow-hidden pl-[3px] pr-[5px]">
      <div className="flex h-[27px] shrink-0 items-center justify-center pt-[6px] text-[#dcdcdc]">
        <button aria-label="Unlink"><UnlinkIcon size={22} /></button>
      </div>
      {PARAMETERS.map(([group, items]) => (
        <div key={group} className="shrink-0">
          <button className="flex h-[21px] items-center gap-[4px] pl-px pt-[2px] text-[10px] text-[#b0b0b0]"><Triangle />{group}</button>
          <div className="flex flex-col gap-px pb-px">
            {items.map(([name, led, selected]) => (
              <button key={name} className={`flex h-[16px] items-center gap-[4px] rounded-[3px] pl-[3px] text-[9px] font-medium text-[#ececec] ${selected ? 'bg-[#608ec8]' : 'bg-[#505050]'}`}>
                <span className={`h-[10px] w-[10px] rounded-full ${LED[led]}`} />{name}
              </button>
            ))}
          </div>
        </div>
      ))}
    </section>
  );
}

function Inspector() {
  const tab = 'flex flex-1 items-center justify-center';
  return (
    <section className="flex w-[169px] shrink-0 flex-col pr-[5px] pt-[6px] text-[9px] font-medium text-[#f0f0f0]">
      <div className="mr-[3px] flex h-[19px] gap-px overflow-hidden rounded-[6px] bg-[#5a5a5a]">
        <button aria-label="Chart" className={`${tab} bg-[#404040]`}><ChartLine size={14} strokeWidth={1.5} /></button>
        <button aria-label="Instrument" className={`${tab} bg-[#41689f]`}><TrumpetIcon /></button>
        <button aria-label="Files" className={`${tab} bg-[#404040]`}><Folder size={15} strokeWidth={1.4} /></button>
        <button aria-label="Playlist" className={`${tab} bg-[#404040]`}><NotesIcon /></button>
        <button aria-label="History" className={`${tab} bg-[#404040]`}><Clock size={14} strokeWidth={1.5} /></button>
      </div>
      <label htmlFor="instrument-label" className="mt-[7px] text-[8px] leading-[14px]">Instrument Label</label>
      <div className="mt-px flex items-center justify-between">
        <input id="instrument-label" className="h-[15px] w-[146px] bg-[#363636] px-1" />
        <button aria-label="Paint" className="mr-px text-white"><PaintRoller size={14} strokeWidth={2} className="fill-current" /></button>
      </div>
      <div className="mt-[5px] flex h-[19px] w-[138px] overflow-hidden rounded-[5px] text-[10px]">
        <button className={`${tab} gap-[4px] bg-[#41689f]`}><WaveIcon />Sound</button>
        <button className={`${tab} gap-[4px] bg-[#404040]`}><KeysIcon size={14} />Ranges</button>
      </div>
      <div className="mt-[9px] rounded-[4px] bg-[#41567e] p-[3px] text-[#9ab0d8]">
        <div className="flex h-[20px] items-center justify-between">
          <div className="flex items-center gap-[9px] text-[11px] font-normal">
            <button aria-label="Enable plug-in" className="h-[16px] w-[16px] rounded-[3px] bg-[#79fb8b]" />
            Audio Plug-in
          </div>
          <Glyph size={15}><rect x="2" y="3" width="20" height="18" /><path d="M2 9h20M2 15h20M5 6h1M5 12h1M5 18h1" /></Glyph>
        </div>
        <div className="mt-[3px] flex items-center justify-between">
          <Picker label="Plug-in" options={['Sprike (4)']} className="h-[18px] w-[139px]" />
          <SquarePen size={15} strokeWidth={1.4} />
        </div>
        <div className="mt-[2px] flex items-center justify-between">
          <Picker label="Preset" options={['01 Streamer (Hold Chords)']} className="h-[18px] w-[139px]" />
          <Headphones size={15} strokeWidth={1.4} />
        </div>
        <div className="mt-[2px] flex w-[139px] items-center justify-end gap-[3px] text-[8px] text-[#8fa0be]">
          Preferred Channel
          <Picker label="Preferred channel" options={['Auto']} className="h-[16px] w-[38px]" />
        </div>
        <div className="mt-[2px] flex items-center justify-between">
          <button className="h-[17px] w-[139px] rounded-[3px] bg-[#446596] text-[#f0f0f0]">Sprike AU</button>
          <Wrench size={14} strokeWidth={1.4} />
        </div>
      </div>
      <div className="mt-[7px] flex gap-[3px]">
        <button className="h-[17px] flex-1 rounded-[5px] border border-[#39424a] bg-[#446596]">Controllers</button>
        <button className="h-[17px] flex-1 rounded-[5px] border border-[#39424a] bg-[#446596]">Articulations</button>
      </div>
      <button className="mt-[5px] flex h-[14px] items-center gap-[3px] text-[10px] font-normal text-[#b0b0b0]"><Triangle right />Sound Details</button>
    </section>
  );
}

export default function App() {
  return (
    <div className="flex h-screen flex-col overflow-hidden bg-[#666] font-[Inter,'Noto_Sans',sans-serif]">
      <MenuBar />
      <Header />
      <div className="flex min-h-0 flex-1">
        <Sidebar />
        <main className="flex min-w-0 flex-1 flex-col">
          <Arrangement />
          <div className="mt-[2px] flex min-h-0 flex-1">
            <Workspace />
            <ParameterList />
            <Inspector />
          </div>
        </main>
      </div>
    </div>
  );
}
